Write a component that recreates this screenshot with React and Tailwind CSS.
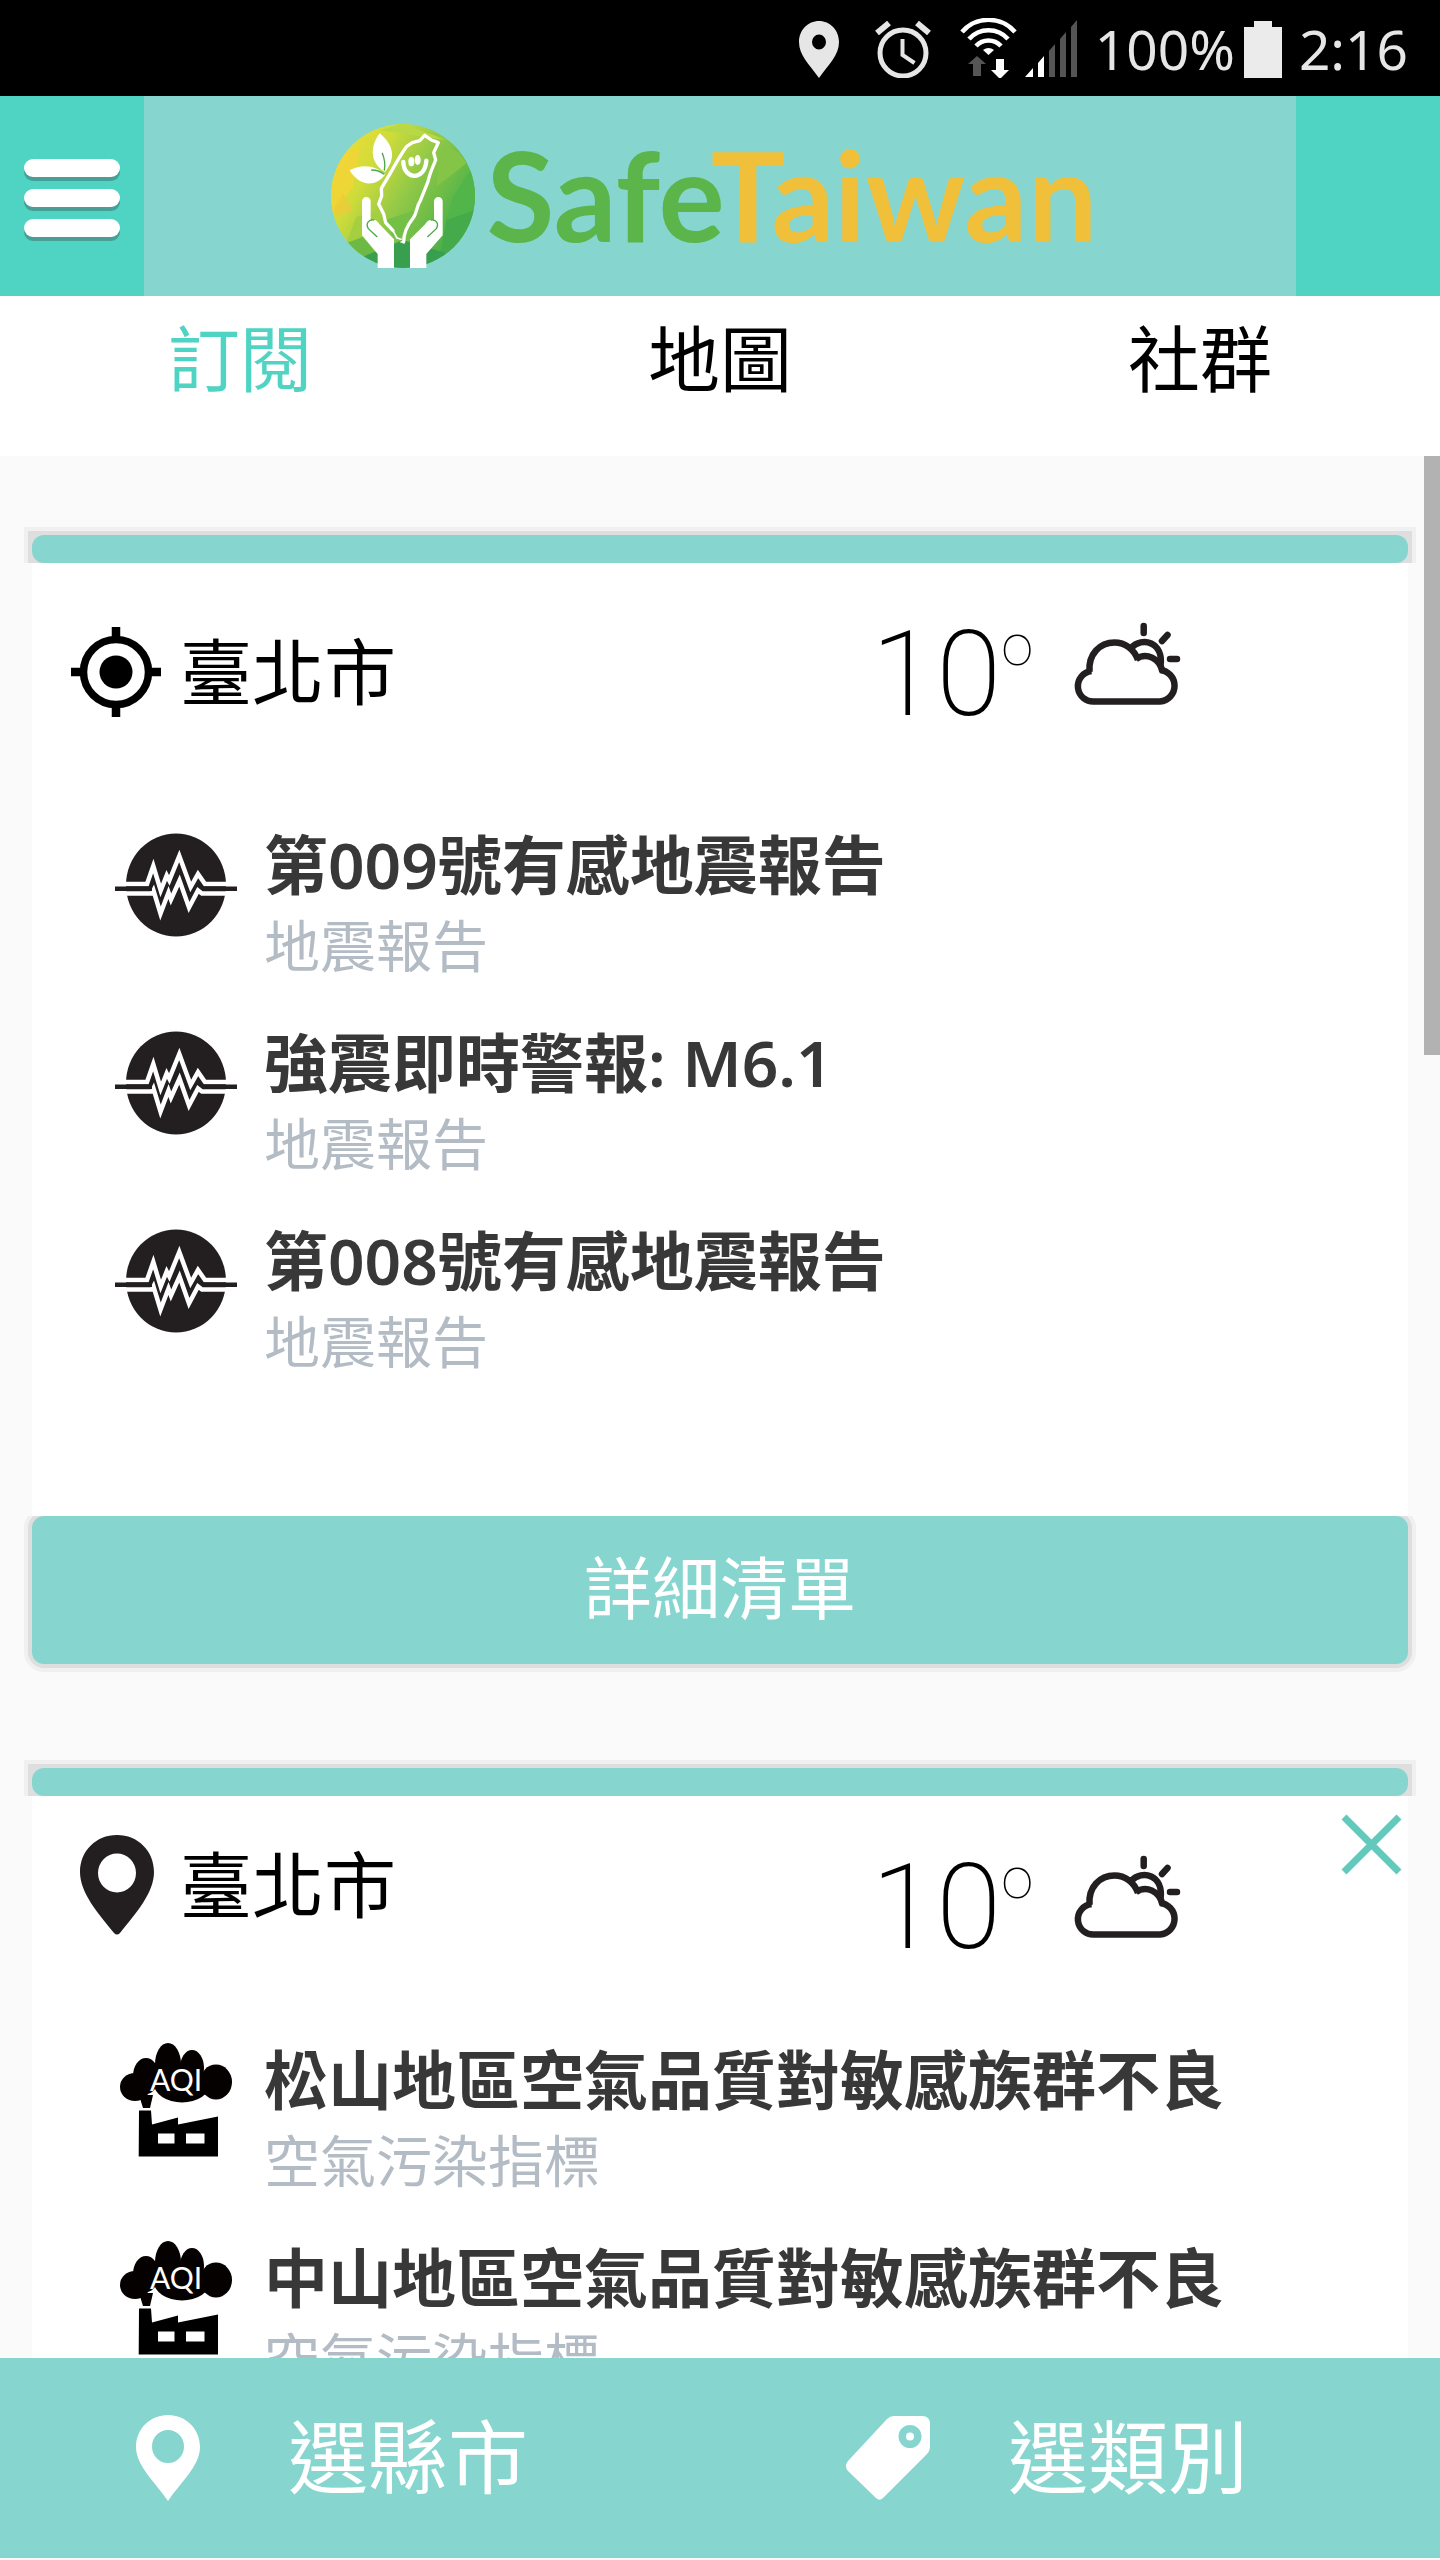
import { useState } from "react";

const TABS = ["訂閱", "地圖", "社群"];

const CARDS = [
    {
        id: "current",
        city: "臺北市",
        located: true,
        temperature: 10,
        type: "quake",
        alerts: [
            { title: "第009號有感地震報告", category: "地震報告" },
            { title: "強震即時警報: M6.1", category: "地震報告" },
            { title: "第008號有感地震報告", category: "地震報告" },
        ],
    },
    {
        id: "taipei",
        city: "臺北市",
        located: false,
        temperature: 10,
        type: "air",
        alerts: [
            { title: "松山地區空氣品質對敏感族群不良", category: "空氣污染指標" },
            { title: "中山地區空氣品質對敏感族群不良", category: "空氣污染指標" },
        ],
    },
];

const StatusBar = () => (
    <div className="flex h-24 shrink-0 items-center justify-end gap-4 bg-black pr-8 text-[#e6e6e6]">
        <svg className="h-15 w-16" viewBox="0 0 64 60" fill="currentColor">
            <path
                fillRule="evenodd"
                d="M24 3C13 3 4 12 4 24c0 13 10 22 20 36 10-14 20-23 20-36C44 12 35 3 24 3zm0 13.500a7 7.500 0 1 1 0 15 7 7.500 0 0 1 0-15z"
            />
        </svg>
        <svg className="h-15 w-16" viewBox="0 0 64 60" fill="none" stroke="currentColor">
            <circle cx="28" cy="35" r="23" strokeWidth="5" />
            <path d="M27.500 21v16l12 8" strokeWidth="4" />
            <path d="M2 15L14 5M54 15L42 5" strokeWidth="6" />
        </svg>
        <svg className="h-15 w-31" viewBox="0 0 124 60">
            <g fill="none" stroke="#fff" strokeWidth="4.500">
                <path d="M7 14a35 35 0 0 1 53 0" />
                <path d="M14 21a26 26 0 0 1 39 0" />
                <path d="M21 28a17 17 0 0 1 25 0" />
            </g>
            <path d="M28 32a9 9 0 0 1 11 0l-5.500 5z" fill="#fff" />
            <path d="M22 38l9 8h-5v12h-8V46h-5z" fill="#555" />
            <path d="M41 41h8v11h5l-9 9-9-9h5z" fill="#fff" />
            <path d="M70 59l8-9v9zM83 59V45l6-7v21z" fill="#fff" />
            <path d="M94 59V33l6-7v33zM105 59V21l6-7v45zM116 59V9l6-7v57z" fill="#555" />
        </svg>
        <div className="flex items-center gap-2">
            <span className="text-[55px] leading-none">100%</span>
            <svg className="h-15 w-10" viewBox="0 0 40 60" fill="#ebebeb">
                <path d="M1 9h10V3h18v6h10v51H1z" />
            </svg>
        </div>
        <span className="text-[55px] leading-none">2:16</span>
    </div>
);

const LogoMark = () => (
    <svg className="size-36" viewBox="54 42 432 432">
        <defs>
            <linearGradient id="leafy" x1="0" y1="0.2" x2="1" y2="0.8">
                <stop offset="0" stopColor="#f0dc35" />
                <stop offset="0.25" stopColor="#cfdc3a" />
                <stop offset="0.5" stopColor="#93c947" />
                <stop offset="0.8" stopColor="#57b548" />
                <stop offset="1" stopColor="#3aa04e" />
            </linearGradient>
            <clipPath id="disc">
                <circle cx="270" cy="258" r="216" />
            </clipPath>
        </defs>
        <g clipPath="url(#disc)">
            <rect x="54" y="42" width="432" height="432" fill="url(#leafy)" />
            <path d="M54 150L140 110 120 230 54 320z" fill="#f2d536" opacity="0.8" />
            <path d="M60 300L90 250 120 300 70 320z" fill="#f0c93a" opacity="0.7" />
            <path d="M200 60L270 42 400 90 330 80z" fill="#b9d944" />
            <path d="M385 100L440 130 460 160 370 230z" fill="#84c548" />
            <path d="M486 160L420 260 400 330 486 360z" fill="#52b54a" />
            <path d="M400 330L486 300 460 400 380 440z" fill="#45ab4a" />
            <path d="M130 320L210 300 160 400 100 400z" fill="#a5cf3f" />
            <path d="M100 400L150 380 190 430 170 460z" fill="#6cba45" />
            <path d="M150 440L270 390 400 430 370 474H150z" fill="#389f4e" />
            <path d="M215 330L310 300 290 390 240 380z" fill="#74c047" />
        </g>
        <g fill="#fff">
            <path d="M200 70C170 110 170 160 216 186 245 150 248 110 200 70z" />
            <path d="M110 181C150 160 190 168 216 194 190 230 140 232 110 181z" />
            <path d="M147 274a13 13 0 0 1 26 0v58c10-6 20 0 26 10l44 46v86h-49v-42l-47-56z" />
            <path d="M389 274a13 13 0 0 0-26 0v58c-10-6-20 0-26 10l-46 46v86h49v-42l49-56z" />
            <ellipse cx="295" cy="155" rx="9" ry="14" />
            <ellipse cx="314" cy="150" rx="9" ry="15" />
        </g>
        <g fill="none" stroke="#fff" strokeLinecap="round" strokeLinejoin="round">
            <path
                strokeWidth="10"
                d="M272 396C272 370 284 345 300 325 312 310 310 290 322 272L345 215C350 190 356 180 368 150L362 128 376 98 355 90 335 76 320 92 298 98 280 110C262 135 240 175 226 200L205 235 206 258 197 282 212 312 218 338 240 362"
            />
            <path strokeWidth="5" d="M240 362L252 384 264 388M272 396h-8" />
            <path strokeWidth="13" d="M271 156C272 210 336 214 340 152" />
        </g>
        <g fill="none" stroke="#4aa947" strokeWidth="4" strokeLinecap="round">
            <path d="M214 180C218 160 214 145 208 130M212 192C200 182 188 180 176 180" />
            <path d="M192 380L166 356C156 338 170 328 182 330M344 380L370 356C380 338 366 328 354 330" />
        </g>
    </svg>
);

const Header = () => (
    <header className="flex h-50 shrink-0 bg-[#4fd3c3]">
        <button type="button" aria-label="選單" className="flex w-[10%] flex-col items-center justify-center gap-3 pt-1">
            <span className="h-[18px] w-24 rounded-full bg-white shadow-[0_4px_0_#479f96]" />
            <span className="h-[18px] w-24 rounded-full bg-white shadow-[0_4px_0_#479f96]" />
            <span className="h-[18px] w-24 rounded-full bg-white shadow-[0_4px_0_#479f96]" />
        </button>
        <h1 className="flex flex-1 items-center justify-center gap-3 bg-[#86d5cf] pr-3 font-['Lato',sans-serif] text-[124px] leading-none font-bold">
            <LogoMark />
            <span className="pb-1">
                <span className="text-[#5bb54a]">Safe</span>
                <span className="text-[#f1c03b]">Taiwan</span>
            </span>
        </h1>
        <div className="w-[10%]" />
    </header>
);

const LocateIcon = () => (
    <svg className="h-26 w-24" viewBox="0 0 96 104" fill="none" stroke="#000">
        <circle cx="48" cy="53" r="32.500" strokeWidth="7.500" />
        <circle cx="48" cy="53" r="16.500" fill="#000" stroke="none" />
        <path d="M48 8v12M48 86v12M3 53h12M81 53h12" strokeWidth="8.500" />
    </svg>
);

const PlaceIcon = () => (
    <svg className="h-26 w-24" viewBox="0 0 96 104" fill="#231f20">
        <path
            fillRule="evenodd"
            d="M49 3C28 3 12 19 12 40c0 21 18 41 34 61q3 3 6 0c16-20 34-40 34-61C86 19 70 3 49 3zm0 18.500a19 19.500 0 1 1 0 39 19 19.500 0 0 1 0-39z"
        />
    </svg>
);

const CloudSunIcon = () => (
    <svg
        className="h-26 w-28"
        viewBox="0 0 112 104"
        fill="none"
        stroke="#231f20"
        strokeWidth="6.500"
    >
        <path d="M20.500 52A15.200 15.200 0 0 0 24 82.500H89A15.800 15.800 0 0 0 89 51" />
        <path d="M18.500 53C17 35 29 23.500 43.500 23.500 54 23.500 63 30 67 41" />
        <path d="M65 40C75 33 89 39 91.500 53" />
        <path d="M60 29C71 17 93 23 89.500 47" />
        <path d="M72.700 7v7M91 22l5.500-6M99 40h7" strokeLinecap="round" />
    </svg>
);

const QuakeIcon = () => (
    <svg className="h-30 w-32 shrink-0" viewBox="0 0 128 120">
        <ellipse cx="64" cy="60" rx="50" ry="51.500" fill="#231f20" />
        <g fill="none" stroke="#fff" strokeWidth="4.500">
            <path d="M12 59H35L41.300 41 48.700 65.500 54.700 50.500 57.300 55.500 67.300 31 78.700 62 86 49 93 59H116" />
            <path d="M12 68.500H40L41.500 65.500 48.500 88.500 56.500 67.500 59 74.500 67.500 55.500 77 82.500 86 65.500 90 68.500H116" />
        </g>
        <path d="M3 63.800H40M91 63.800H125" stroke="#231f20" strokeWidth="4.500" />
    </svg>
);

const AirIcon = () => (
    <svg className="h-30 w-32 shrink-0" viewBox="0 0 128 120">
        <g fill="#050101">
            <ellipse cx="23" cy="47" rx="15" ry="14" />
            <ellipse cx="34" cy="36" rx="13" ry="18" />
            <ellipse cx="56" cy="24" rx="13" ry="21" />
            <ellipse cx="80" cy="28" rx="12" ry="18" />
            <ellipse cx="104" cy="42" rx="16" ry="17.500" />
            <ellipse cx="70" cy="44" rx="28" ry="18.500" />
            <path d="M27 55h14l-3 13h-7z" />
        </g>
        <path
            fillRule="evenodd"
            d="M27 70.500h12l1 14 26-7v7l40-8v40H26.700zM46 93.500v10h16.500v-10zM74 93.500v10h18.500v-10z"
        />
        <text x="38" y="51" fill="#fff" className="font-['Lato',sans-serif] text-[30px] font-normal">
            AQI
        </text>
    </svg>
);

const AlertItem = ({ type, title, category }) => (
    <li className="flex h-40 items-start gap-6">
        {type === "quake" ? <QuakeIcon /> : <AirIcon />}
        <div className="whitespace-nowrap">
            <p className="text-[64px] leading-20 font-semibold text-[#383838]">{title}</p>
            <p className="text-[56px] leading-20 text-[#b3bbc4]">{category}</p>
        </div>
    </li>
);

const CityCard = ({ card, onRemove }) => (
    <section>
        <div className="mx-6 bg-[#f0f0f0] px-1 pt-1">
            <div className="bg-[#dedede] px-1 pt-1">
                <div className="h-7 rounded-xl bg-[#86d5cf]" />
            </div>
        </div>

        <div className="relative mx-8 bg-white">
            <div className={card.located ? "flex h-[262px] items-start" : "flex h-[244px] items-start"}>
                <div className={card.located ? "mt-14 flex w-[61%] items-center gap-4 pl-9" : "mt-9 flex w-[61%] items-center gap-4 pl-9"}>
                    {card.located ? <LocateIcon /> : <PlaceIcon />}
                    <h2 className="text-[72px] leading-none">{card.city}</h2>
                </div>
                <div className="mt-14 flex">
                    <p className="flex w-50 items-start font-['Roboto',sans-serif] font-extralight">
                        <span className="text-[118px] leading-[112px]">{card.temperature}</span>
                        <sup className="top-0 text-[58px] leading-13 font-thin">o</sup>
                    </p>
                    <CloudSunIcon />
                </div>
            </div>

            {!card.located && (
                <button type="button" aria-label="移除" onClick={onRemove} className="absolute top-4 right-1">
                    <svg className="size-16" viewBox="0 0 64 64" stroke="#62cabd" strokeWidth="7">
                        <path d="M4 5l55 55M59 5L4 60" />
                    </svg>
                </button>
            )}

            <ul className="flex flex-col gap-[38px] pb-[135px] pl-20">
                {card.alerts.map((alert, index) => (
                    <AlertItem key={`${card.id}-${index}`} type={card.type} {...alert} />
                ))}
            </ul>
        </div>

        {/* Clipped at the top so the button's outline only shows on the sides and below */}
        <div className="mx-6 overflow-hidden px-2 pb-2">
            <button
                type="button"
                className="block h-37 w-full rounded-xl bg-[#86d5cf] pb-1 text-[68px] text-white shadow-[0_0_0_4px_#dedede,0_0_0_8px_#f0f0f0]"
            >
                詳細清單
            </button>
        </div>
    </section>
);

const BottomBar = () => (
    <footer className="mb-0.5 grid h-50 shrink-0 grid-cols-2 bg-[#86d5cf] text-[80px] leading-none text-white">
        <button type="button" className="flex items-center gap-16 pl-30">
            <svg className="h-22 w-26" viewBox="0 0 104 88" fill="currentColor">
                <path
                    fillRule="evenodd"
                    d="M48 1C30 1 16 15 16 33c0 19 20 36 32 54 12-18 32-35 32-54C80 15 66 1 48 1zm0 15a16 16.500 0 1 1 0 33 16 16.500 0 0 1 0-33z"
                />
            </svg>
            <span className="pb-1">選縣市</span>
        </button>
        <button type="button" className="flex items-center gap-16 pl-30">
            <svg className="h-22 w-26" viewBox="0 0 104 88" fill="currentColor">
                <path
                    fillRule="evenodd"
                    d="M54 2h28q8 0 8 8v23q0 4-3 7L44 83q-4 5-8 1L8 57q-4-5 0-10L47 5q3-3 7-3zM70 11a11.500 11.500 0 1 0 0 23 11.500 11.500 0 0 0 0-23z"
                />
                <circle cx="70" cy="22.500" r="4" />
            </svg>
            <span className="pb-1">選類別</span>
        </button>
    </footer>
);

export default function App() {
    const [activeTab, setActiveTab] = useState(TABS[0]);
    const [cards, setCards] = useState(CARDS);

    const removeCard = (id) => setCards(cards.filter((card) => card.id !== id));

    return (
        <div className="flex h-screen flex-col bg-[#fafafa] font-['Noto_Sans','Noto_Sans_CJK_TC',sans-serif] text-black">
            <StatusBar />
            <Header />
            <nav className="grid h-40 shrink-0 grid-cols-3 bg-white text-[72px]">
                {TABS.map((tab) => (
                    <button
                        key={tab}
                        type="button"
                        onClick={() => setActiveTab(tab)}
                        className={tab === activeTab ? "pb-9 leading-none text-[#4fd3c3]" : "pb-9 leading-none"}
                    >
                        {tab}
                    </button>
                ))}
            </nav>
            <div className="relative min-h-0 flex-1">
                <main className="flex h-full flex-col gap-22 overflow-y-auto pt-[71px] [scrollbar-width:none]">
                    {cards.map((card) => (
                        <CityCard key={card.id} card={card} onRemove={() => removeCard(card.id)} />
                    ))}
                </main>
                <div className="absolute top-0 right-0 h-[599px] w-4 bg-[#b2b2b2]" />
            </div>
            <BottomBar />
        </div>
    );
}
